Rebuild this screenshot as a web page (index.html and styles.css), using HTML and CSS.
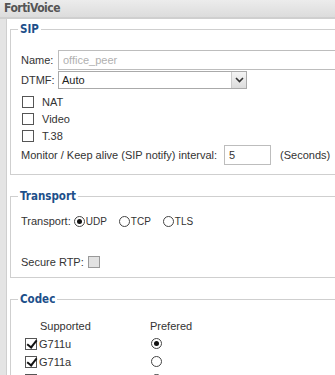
FILE: index.html
```html
<!DOCTYPE html>
<html lang="en">
<head>
  <meta charset="UTF-8">
  <title>FortiVoice - SIP Peer</title>
  <link rel="stylesheet" href="styles.css">
</head>
<body>
  <div class="titlebar">FortiVoice</div>
  <div class="page">
    <div class="panel">
      <!-- SIP settings -->
      <fieldset class="group sip">
        <legend>SIP</legend>
        <div class="row">
          <span class="lbl">Name:</span>
          <input type="text" class="field name" placeholder="office_peer">
        </div>
        <div class="row">
          <span class="lbl">DTMF:</span>
          <div class="select">
            <span>Auto</span>
            <span class="arrow">
              <svg width="9" height="6" viewBox="0 0 9 6"><path d="M1 1 L4.5 4.5 L8 1" fill="none" stroke="#333" stroke-width="1.6"/></svg>
            </span>
          </div>
        </div>
        <div class="checks">
          <label class="check"><span class="box"></span>NAT</label>
          <label class="check"><span class="box"></span>Video</label>
          <label class="check"><span class="box"></span>T.38</label>
        </div>
        <div class="row monitor">
          <span>Monitor / Keep alive (SIP notify) interval:</span>
          <input type="text" class="field interval" value="5">
          <span class="unit">(Seconds)</span>
        </div>
      </fieldset>

      <!-- Transport -->
      <fieldset class="group transport">
        <legend>Transport</legend>
        <div class="row radios">
          <span>Transport:</span>
          <label class="opt"><span class="radio on"></span>UDP</label>
          <label class="opt"><span class="radio"></span>TCP</label>
          <label class="opt"><span class="radio"></span>TLS</label>
        </div>
        <div class="row rtp">
          <span>Secure RTP:</span>
          <span class="box grey"></span>
        </div>
      </fieldset>

      <!-- Codec -->
      <fieldset class="group codec">
        <legend>Codec</legend>
        <table class="codecs">
          <tr><th class="sup">Supported</th><th>Prefered</th></tr>
          <tr>
            <td><label class="check"><span class="box ticked"></span>G711u</label></td>
            <td><span class="radio on"></span></td>
          </tr>
          <tr>
            <td><label class="check"><span class="box ticked"></span>G711a</label></td>
            <td><span class="radio"></span></td>
          </tr>
          <tr>
            <td><label class="check"><span class="box ticked"></span>G729</label></td>
            <td><span class="radio"></span></td>
          </tr>
        </table>
      </fieldset>
    </div>
  </div>
</body>
</html>
```

FILE: styles.css
```css
body {
  margin: 0;
  font-family: "Liberation Sans", Arial, sans-serif;
  font-size: 11px;
  color: #333;
  background-color: #fff;
  overflow: hidden;
}
/* Top title bar */
.titlebar {
  height: 17px;
  line-height: 17px;
  padding-left: 4px;
  background: linear-gradient(#ececec, #dcdcdc);
  border-bottom: 2px solid #cfcfcf;
  font-family: "DejaVu Sans Condensed", "DejaVu Sans", sans-serif;
  font-weight: bold;
  font-size: 12px;
  letter-spacing: -0.5px;
  color: #555;
}
.page {
  border-left: 6px solid #e4e4e4;
  width: 360px;
}
.panel {
  border-left: 1px solid #cfcfcf;
  padding: 3px 0 0 3px;
}
/* Fieldset groups */
.group {
  border: 1px solid #cfcfcf;
  margin: 0 0 14px 0;
  padding: 0 10px 0 10px;
}
.group legend {
  font-family: "DejaVu Sans Condensed", "DejaVu Sans", sans-serif;
  font-weight: bold;
  font-size: 11.5px;
  color: #1d4f8a;
  padding: 0 2px;
  margin-left: -3px;
}
.row {
  display: flex;
  align-items: center;
}
.sip {
  padding-top: 14px;
  padding-bottom: 9px;
}
.lbl {
  width: 37px;
}
.field {
  font-family: inherit;
  font-size: 11px;
  color: #333;
  border: 1px solid #bdbdbd;
  height: 20px;
  box-sizing: border-box;
  padding: 0 4px;
  outline: none;
}
.field::placeholder {
  color: #b0b0b0;
}
.name {
  width: 300px;
}
.select {
  display: flex;
  align-items: center;
  justify-content: space-between;
  width: 189px;
  height: 18px;
  margin-top: 1px;
  box-sizing: border-box;
  border: 1px solid #aaa;
  padding-left: 3px;
  color: #222;
}
.select .arrow {
  width: 14px;
  height: 16px;
  display: flex;
  align-items: center;
  justify-content: center;
  border-left: 1px solid #ccc;
  background: linear-gradient(#f4f4f4, #dcdcdc);
}
.checks {
  padding-top: 4px;
}
.check {
  display: flex;
  align-items: center;
  height: 17px;
}
.box {
  display: inline-block;
  width: 10px;
  height: 10px;
  border: 1px solid #555;
  margin: 0 8px 0 1px;
  background: #fff;
  position: relative;
}
.box.ticked::after {
  content: "";
  position: absolute;
  left: 3px;
  top: -1px;
  width: 4px;
  height: 8px;
  border: solid #111;
  border-width: 0 2px 2px 0;
  transform: rotate(38deg);
}
.box.grey {
  background: #e2e2e2;
  border-color: #999;
  margin-left: 4px;
}
.monitor {
  margin-top: 1px;
}
.interval {
  width: 47px;
  margin-left: 7px;
}
.unit {
  margin-left: 9px;
}
/* Transport */
.transport {
  padding-top: 10px;
  padding-bottom: 9px;
}
.radios {
  height: 16px;
}
.opt {
  display: flex;
  align-items: center;
  font-size: 10px;
  margin-right: 12px;
}
.radios .opt:first-of-type {
  margin-left: 3px;
}
.radio {
  display: inline-block;
  width: 9px;
  height: 9px;
  border: 1px solid #444;
  border-radius: 50%;
  margin-right: 1px;
  position: relative;
}
.radio.on::after {
  content: "";
  position: absolute;
  left: 2px;
  top: 2px;
  width: 5px;
  height: 5px;
  border-radius: 50%;
  background: #111;
}
.rtp {
  margin-top: 27px;
}
/* Codec table */
.codec {
  padding-top: 14px;
}
.codecs {
  border-collapse: collapse;
}
.codecs th {
  font-weight: normal;
  text-align: left;
  padding: 0 0 3px 0;
}
.codecs th.sup {
  padding-left: 19px;
  width: 110px;
}
.codecs td {
  height: 18px;
  padding: 0;
}
.codecs .box {
  margin-left: 4px;
  margin-right: 2px;
}
.codecs .radio {
  margin-left: 1px;
}
```
